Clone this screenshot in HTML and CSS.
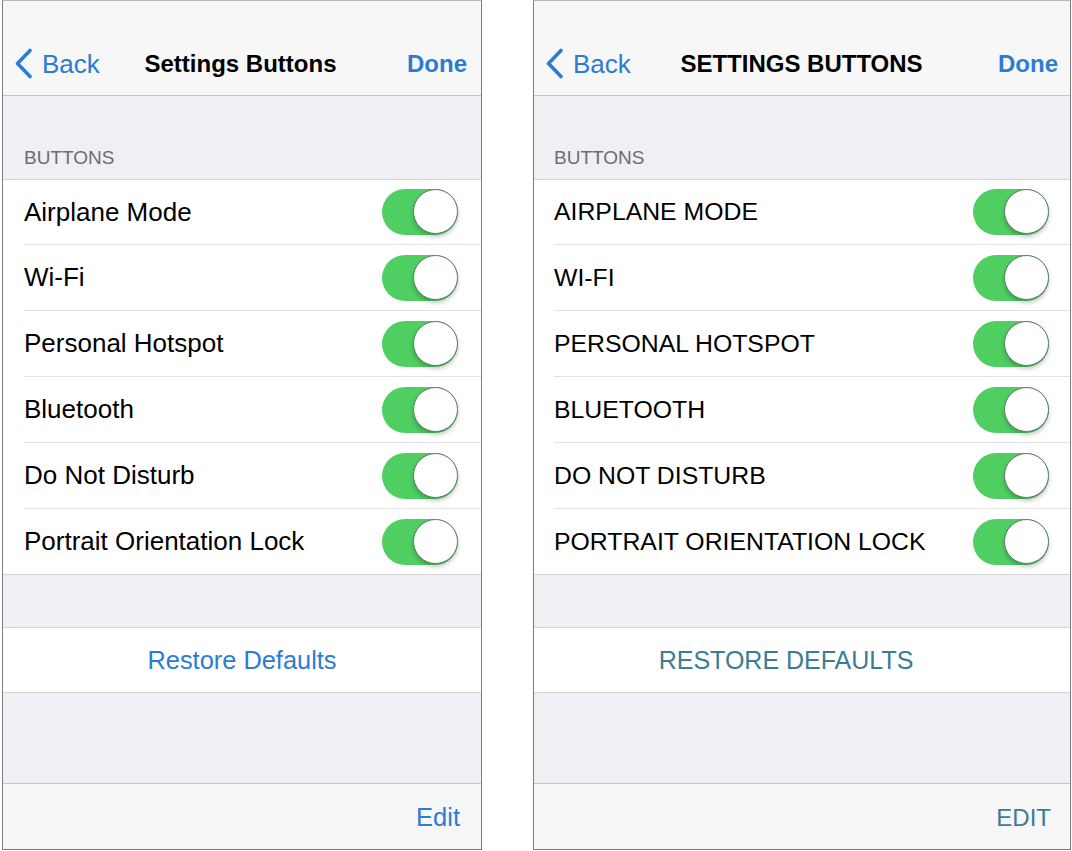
FILE: index.html
```html
<!DOCTYPE html>
<html lang="en">
<head>
  <meta charset="UTF-8">
  <title>Settings Buttons</title>
  <link rel="stylesheet" href="styles.css">
</head>
<body>
  <div class="screens">

    <div class="phone">
      <div class="navbar">
        <a class="nav-back">
          <svg class="chevron" width="19" height="31" viewBox="0 0 19 31"><path d="M16 2.5 L3.5 15.5 L16 28.5" fill="none" stroke="#2b7cd3" stroke-width="3.6" stroke-linecap="round" stroke-linejoin="round"/></svg>
          <span>Back</span>
        </a>
        <div class="nav-title">Settings Buttons</div>
        <a class="nav-done">Done</a>
      </div>

      <div class="section-header">BUTTONS</div>
      <div class="group">
        <div class="row"><div class="row-inner"><span class="label">Airplane Mode</span><span class="switch"></span></div></div>
        <div class="row"><div class="row-inner"><span class="label">Wi-Fi</span><span class="switch"></span></div></div>
        <div class="row"><div class="row-inner"><span class="label">Personal Hotspot</span><span class="switch"></span></div></div>
        <div class="row"><div class="row-inner"><span class="label">Bluetooth</span><span class="switch"></span></div></div>
        <div class="row"><div class="row-inner"><span class="label">Do Not Disturb</span><span class="switch"></span></div></div>
        <div class="row"><div class="row-inner"><span class="label">Portrait Orientation Lock</span><span class="switch"></span></div></div>
      </div>

      <div class="gap"></div>
      <div class="button-cell">Restore Defaults</div>
      <div class="filler"></div>
      <div class="toolbar"><a class="toolbar-btn">Edit</a></div>
    </div>

    <div class="phone phone-caps">
      <div class="navbar">
        <a class="nav-back">
          <svg class="chevron" width="19" height="31" viewBox="0 0 19 31"><path d="M16 2.5 L3.5 15.5 L16 28.5" fill="none" stroke="#2b7cd3" stroke-width="3.6" stroke-linecap="round" stroke-linejoin="round"/></svg>
          <span>Back</span>
        </a>
        <div class="nav-title">Settings Buttons</div>
        <a class="nav-done">Done</a>
      </div>

      <div class="section-header">BUTTONS</div>
      <div class="group">
        <div class="row"><div class="row-inner"><span class="label">Airplane Mode</span><span class="switch"></span></div></div>
        <div class="row"><div class="row-inner"><span class="label">Wi-Fi</span><span class="switch"></span></div></div>
        <div class="row"><div class="row-inner"><span class="label">Personal Hotspot</span><span class="switch"></span></div></div>
        <div class="row"><div class="row-inner"><span class="label">Bluetooth</span><span class="switch"></span></div></div>
        <div class="row"><div class="row-inner"><span class="label">Do Not Disturb</span><span class="switch"></span></div></div>
        <div class="row"><div class="row-inner"><span class="label">Portrait Orientation Lock</span><span class="switch"></span></div></div>
      </div>

      <div class="gap"></div>
      <div class="button-cell">Restore Defaults</div>
      <div class="filler"></div>
      <div class="toolbar"><a class="toolbar-btn">Edit</a></div>
    </div>

  </div>
</body>
</html>
```

FILE: styles.css
```css
body {
  margin: 0;
  padding: 0;
  background-color: #ffffff;
  font-family: "Liberation Sans", Arial, sans-serif;
  color: #000;
}
.screens {
  display: flex;
  gap: 51px;
  padding-left: 2px;
}
.phone {
  width: 480px;
  height: 850px;
  box-sizing: border-box;
  border: 1.5px solid #7c7c7c;
  border-top-color: #b8b8b8;
  background-color: #efeff4;
  display: flex;
  flex-direction: column;
  --pad: 21px;
  --link: #2b7cd3;
}
.phone-caps {
  width: 538px;
  --pad: 20px;
  --link2: #3b7c96;
}

/* nav bar */
.navbar {
  height: 95px;
  box-sizing: border-box;
  padding: 31px 14px 0 11px;
  background-color: #f7f7f7;
  border-bottom: 1px solid #c6c6c9;
  display: grid;
  grid-template-columns: 1fr auto 1fr;
  align-items: center;
}
.nav-back {
  display: flex;
  align-items: center;
  gap: 9px;
  color: var(--link);
  font-size: 26px;
}
.nav-back span {
  margin-top: 1px;
}
.nav-title {
  font-size: 24px;
  font-weight: bold;
  text-align: center;
}
.nav-done {
  justify-self: end;
  color: var(--link);
  font-size: 24px;
  font-weight: bold;
}
.phone-caps .navbar {
  padding-right: 12px;
}
.phone-caps .nav-title {
  text-transform: uppercase;
}

/* grouped table */
.section-header {
  height: 83px;
  box-sizing: border-box;
  padding: 0 var(--pad) 10px;
  display: flex;
  align-items: flex-end;
  font-size: 19px;
  color: #6d6d72;
}
.group {
  background-color: #fff;
  border-top: 1px solid #d6d6da;
  border-bottom: 1px solid #d6d6da;
}
.row {
  padding-left: var(--pad);
}
.row-inner {
  height: 65px;
  padding-right: 23px;
  display: flex;
  align-items: center;
  justify-content: space-between;
  border-bottom: 1px solid #e2e2e4;
}
.row:first-child .row-inner {
  height: 64px;
}
.row:last-child .row-inner {
  border-bottom: none;
}
.label {
  font-size: 26px;
}
.phone-caps .row-inner {
  padding-right: 21px;
}
.phone-caps .label {
  text-transform: uppercase;
  font-size: 24.8px;
}

.switch {
  position: relative;
  width: 76px;
  height: 46px;
  border-radius: 23px;
  background-color: #4fcf61;
}
.switch::after {
  content: "";
  position: absolute;
  top: 0;
  right: 0;
  width: 43px;
  height: 43px;
  border-radius: 50%;
  background-color: #fff;
  border: 1.5px solid #5a8062;
  box-shadow: 0 3px 4px rgba(0, 0, 0, 0.22);
}

.gap {
  height: 52px;
}
.button-cell {
  height: 64px;
  background-color: #fff;
  border-top: 1px solid #d6d6da;
  border-bottom: 1px solid #d6d6da;
  display: flex;
  align-items: center;
  justify-content: center;
  font-size: 25.4px;
  color: var(--link);
}
.phone-caps .button-cell {
  text-transform: uppercase;
  color: var(--link2);
  font-size: 25px;
  padding-right: 32px;
}
.filler {
  flex: 1;
}

/* bottom toolbar */
.toolbar {
  height: 63px;
  background-color: #f7f7f8;
  border-top: 1px solid #c6c6c9;
  display: flex;
  align-items: center;
  justify-content: flex-end;
  padding: 2px 21px 0;
}
.toolbar-btn {
  font-size: 25.5px;
  color: var(--link);
}
.phone-caps .toolbar-btn {
  text-transform: uppercase;
  color: var(--link2);
  font-size: 24px;
  margin-right: -2px;
}
```
